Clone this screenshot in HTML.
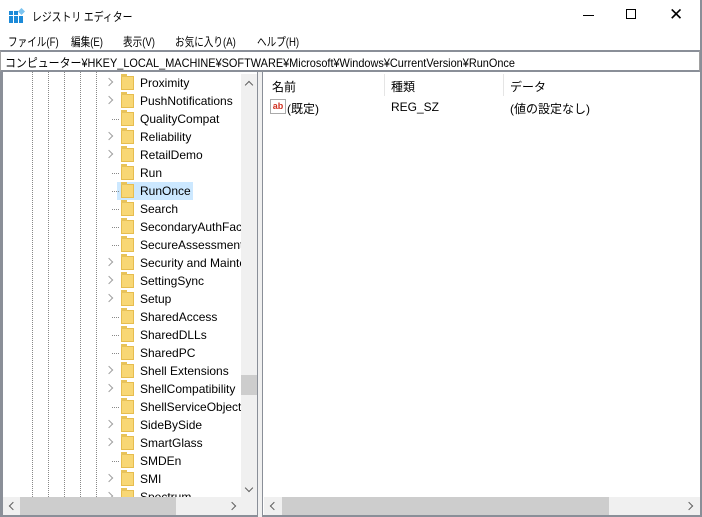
<!DOCTYPE html><html><head><meta charset="utf-8"><style>
*{margin:0;padding:0;box-sizing:border-box}
body{width:702px;height:517px;background:#fff;font-family:"Liberation Sans","Noto Sans CJK JP",sans-serif;font-size:12px;color:#000;position:relative;overflow:hidden}
.a{position:absolute}
.m{position:absolute;top:33px;transform:scaleX(0.8);transform-origin:0 0;white-space:nowrap}
.row{position:absolute;left:0;height:18px;line-height:18px;white-space:nowrap}
.fold{position:absolute;left:121px;top:2px;width:13px;height:14px;background:#f8d775;border:1px solid #e6bd4f}
.fold:before{content:"";position:absolute;left:-1px;top:-3px;width:6px;height:3px;background:#e8c35a}
.t{position:absolute;left:140px;top:0}
.arr{position:absolute;left:106px;top:5px;width:6px;height:6px;border-right:1.5px solid #a0a0a0;border-top:1.5px solid #a0a0a0;transform:rotate(45deg)}
.dh{position:absolute;left:112px;top:9px;width:7px;border-top:1px dotted #888}
.vl{position:absolute;top:72px;height:425px;border-left:1px dotted #888}
.chev{position:absolute;width:6px;height:6px;border-left:1.5px solid #606060;border-top:1.5px solid #606060}
</style></head><body>
<div class="a" style="left:700px;top:0;width:2px;height:517px;background:#8a8f98"></div>
<div class="a" style="left:0;top:515px;width:702px;height:2px;background:#8a8f98"></div>
<svg class="a" style="left:9px;top:8px" width="16" height="16"><g fill="#1c8ad8"><rect x="0" y="3" width="4" height="4"/><rect x="5" y="3" width="4" height="4"/><rect x="0" y="8" width="4" height="4"/><rect x="5" y="8" width="4" height="4"/><rect x="10" y="8" width="4" height="4"/><rect x="0" y="12" width="4" height="3"/><rect x="5" y="12" width="4" height="3"/><rect x="10" y="12" width="4" height="3"/></g><rect x="10" y="1" width="5" height="5" fill="#7cc4f0" transform="rotate(45 12.5 3.5)"/></svg>
<div class="a" style="left:32px;top:8px;transform:scaleX(0.82);transform-origin:0 0;white-space:nowrap">レジストリ エディター</div>
<div class="a" style="left:583px;top:15px;width:11px;border-top:1px solid #000"></div>
<div class="a" style="left:626px;top:9px;width:10px;height:10px;border:1px solid #000"></div>
<div class="a" style="left:669px;top:6px;font-size:17px;line-height:17px">✕</div>
<div class="m" style="left:8px">ファイル(F)</div>
<div class="m" style="left:71px">編集(E)</div>
<div class="m" style="left:123px">表示(V)</div>
<div class="m" style="left:175px">お気に入り(A)</div>
<div class="m" style="left:257px">ヘルプ(H)</div>
<div class="a" style="left:0;top:50px;width:700px;height:22px;border:1px solid #a0a0a0;border-top:2px solid #8a8f98;border-bottom:2px solid #8a8f98;background:#fff"></div>
<div class="a" style="left:5px;top:54px;transform:scaleX(0.91);transform-origin:0 0;white-space:nowrap">コンピューター¥HKEY_LOCAL_MACHINE¥SOFTWARE¥Microsoft¥Windows¥CurrentVersion¥RunOnce</div>
<div class="a" style="left:0;top:72px;width:3px;height:445px;background:#8a8f98"></div>
<div class="a" style="left:257px;top:72px;width:6px;height:445px;background:#f0f0f0;border-left:1px solid #8a8f98;border-right:1px solid #8a8f98"></div>
<div class="vl" style="left:32px"></div><div class="vl" style="left:48px"></div><div class="vl" style="left:64px"></div><div class="vl" style="left:80px"></div><div class="vl" style="left:96px"></div>
<div class="a" style="left:0;top:74px;width:241px;height:423px;overflow:hidden">
<div class="row" style="top:0"><i class="arr"></i><i class="fold"></i><span class="t">Proximity</span></div>
<div class="row" style="top:18px"><i class="arr"></i><i class="fold"></i><span class="t">PushNotifications</span></div>
<div class="row" style="top:36px"><i class="dh"></i><i class="fold"></i><span class="t">QualityCompat</span></div>
<div class="row" style="top:54px"><i class="arr"></i><i class="fold"></i><span class="t">Reliability</span></div>
<div class="row" style="top:72px"><i class="arr"></i><i class="fold"></i><span class="t">RetailDemo</span></div>
<div class="row" style="top:90px"><i class="dh"></i><i class="fold"></i><span class="t">Run</span></div>
<div class="a" style="left:117px;top:108px;width:76px;height:18px;background:#cce8ff"></div>
<div class="row" style="top:108px"><i class="dh"></i><i class="fold"></i><span class="t">RunOnce</span></div>
<div class="row" style="top:126px"><i class="dh"></i><i class="fold"></i><span class="t">Search</span></div>
<div class="row" style="top:144px"><i class="dh"></i><i class="fold"></i><span class="t">SecondaryAuthFactor</span></div>
<div class="row" style="top:162px"><i class="dh"></i><i class="fold"></i><span class="t">SecureAssessment</span></div>
<div class="row" style="top:180px"><i class="arr"></i><i class="fold"></i><span class="t">Security and Maintenance</span></div>
<div class="row" style="top:198px"><i class="arr"></i><i class="fold"></i><span class="t">SettingSync</span></div>
<div class="row" style="top:216px"><i class="arr"></i><i class="fold"></i><span class="t">Setup</span></div>
<div class="row" style="top:234px"><i class="dh"></i><i class="fold"></i><span class="t">SharedAccess</span></div>
<div class="row" style="top:252px"><i class="dh"></i><i class="fold"></i><span class="t">SharedDLLs</span></div>
<div class="row" style="top:270px"><i class="dh"></i><i class="fold"></i><span class="t">SharedPC</span></div>
<div class="row" style="top:288px"><i class="arr"></i><i class="fold"></i><span class="t">Shell Extensions</span></div>
<div class="row" style="top:306px"><i class="arr"></i><i class="fold"></i><span class="t">ShellCompatibility</span></div>
<div class="row" style="top:324px"><i class="dh"></i><i class="fold"></i><span class="t">ShellServiceObjectDelay</span></div>
<div class="row" style="top:342px"><i class="arr"></i><i class="fold"></i><span class="t">SideBySide</span></div>
<div class="row" style="top:360px"><i class="arr"></i><i class="fold"></i><span class="t">SmartGlass</span></div>
<div class="row" style="top:378px"><i class="dh"></i><i class="fold"></i><span class="t">SMDEn</span></div>
<div class="row" style="top:396px"><i class="arr"></i><i class="fold"></i><span class="t">SMI</span></div>
<div class="row" style="top:414px"><i class="arr"></i><i class="fold"></i><span class="t">Spectrum</span></div>
</div>
<div class="a" style="left:241px;top:74px;width:16px;height:423px;background:#f0f0f0"></div>
<i class="chev" style="left:246px;top:82px;transform:rotate(45deg)"></i>
<div class="a" style="left:241px;top:375px;width:16px;height:20px;background:#cdcdcd"></div>
<i class="chev" style="left:246px;top:485px;transform:rotate(225deg)"></i>
<div class="a" style="left:3px;top:497px;width:254px;height:18px;background:#f0f0f0"></div>
<div class="a" style="left:20px;top:497px;width:156px;height:18px;background:#cdcdcd"></div>
<i class="chev" style="left:10px;top:503px;transform:rotate(-45deg)"></i>
<i class="chev" style="left:229px;top:503px;transform:rotate(135deg)"></i>
<div class="a" style="left:384px;top:74px;height:22px;border-left:1px solid #e5e5e5"></div>
<div class="a" style="left:503px;top:74px;height:22px;border-left:1px solid #e5e5e5"></div>
<div class="a" style="left:272px;top:78px">名前</div>
<div class="a" style="left:391px;top:78px">種類</div>
<div class="a" style="left:510px;top:78px">データ</div>
<div class="a" style="left:270px;top:99px;width:16px;height:15px;border:1px solid #aaa;background:#fff;font-size:9px;font-weight:bold;color:#d03020;line-height:12px;text-align:center">ab</div>
<div class="a" style="left:287px;top:100px">(既定)</div>
<div class="a" style="left:391px;top:100px">REG_SZ</div>
<div class="a" style="left:510px;top:100px">(値の設定なし)</div>
<div class="a" style="left:264px;top:497px;width:436px;height:18px;background:#f0f0f0"></div>
<div class="a" style="left:282px;top:497px;width:327px;height:18px;background:#cdcdcd"></div>
<i class="chev" style="left:271px;top:503px;transform:rotate(-45deg)"></i>
<i class="chev" style="left:686px;top:503px;transform:rotate(135deg)"></i>
</body></html>
